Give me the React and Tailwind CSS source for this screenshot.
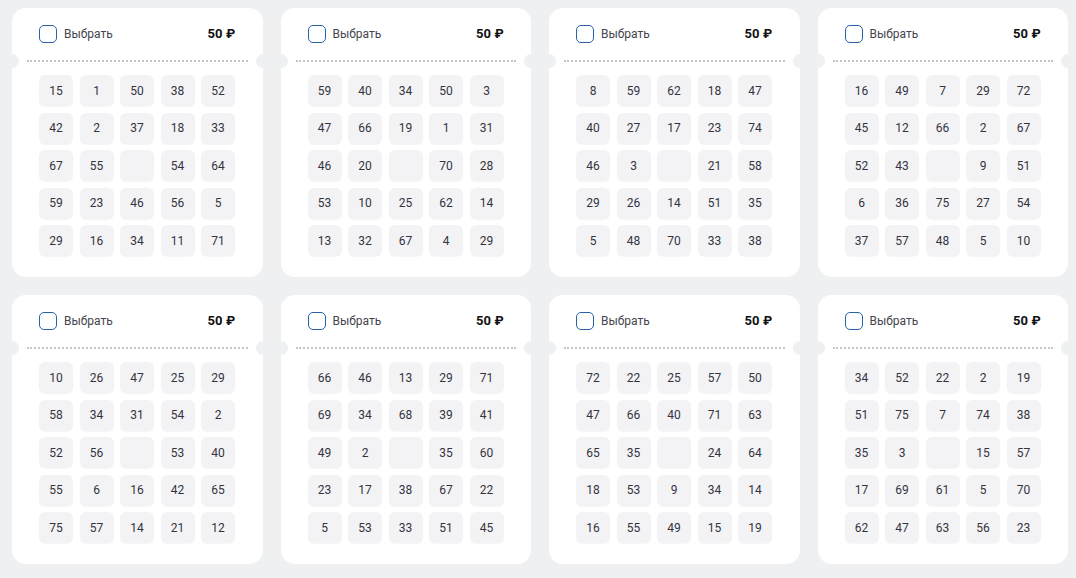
import React from 'react';

const tickets = [
  [[15, 1, 50, 38, 52], [42, 2, 37, 18, 33], [67, 55, null, 54, 64], [59, 23, 46, 56, 5], [29, 16, 34, 11, 71]],
  [[59, 40, 34, 50, 3], [47, 66, 19, 1, 31], [46, 20, null, 70, 28], [53, 10, 25, 62, 14], [13, 32, 67, 4, 29]],
  [[8, 59, 62, 18, 47], [40, 27, 17, 23, 74], [46, 3, null, 21, 58], [29, 26, 14, 51, 35], [5, 48, 70, 33, 38]],
  [[16, 49, 7, 29, 72], [45, 12, 66, 2, 67], [52, 43, null, 9, 51], [6, 36, 75, 27, 54], [37, 57, 48, 5, 10]],
  [[10, 26, 47, 25, 29], [58, 34, 31, 54, 2], [52, 56, null, 53, 40], [55, 6, 16, 42, 65], [75, 57, 14, 21, 12]],
  [[66, 46, 13, 29, 71], [69, 34, 68, 39, 41], [49, 2, null, 35, 60], [23, 17, 38, 67, 22], [5, 53, 33, 51, 45]],
  [[72, 22, 25, 57, 50], [47, 66, 40, 71, 63], [65, 35, null, 24, 64], [18, 53, 9, 34, 14], [16, 55, 49, 15, 19]],
  [[34, 52, 22, 2, 19], [51, 75, 7, 74, 38], [35, 3, null, 15, 57], [17, 69, 61, 5, 70], [62, 47, 63, 56, 23]],
];

const Ticket = ({ rows }) => (
  <div className="relative h-[269px] bg-white rounded-[14px]">
    {/* notches */}
    <div className="absolute left-[-7px] top-[46px] w-[14px] h-[14px] rounded-full bg-[#eff0f1]" />
    <div className="absolute right-[-7px] top-[46px] w-[14px] h-[14px] rounded-full bg-[#eff0f1]" />

    <div className="flex items-center justify-between px-[27px] pt-[17px] h-[35px]">
      <label className="flex items-center gap-[7px]">
        <span className="w-[18px] h-[18px] rounded-[5px] border-[1.5px] border-[#2862a6] bg-white" />
        <span className="text-[12px] text-[#44444e]">Выбрать</span>
      </label>
      <span className="text-[13px] font-bold text-[#111] tracking-[0.2px]">50 ₽</span>
    </div>

    <div className="mx-[15px] mt-[17px] border-t-2 border-dotted border-[#c4c5cb]" />

    <div className="grid grid-cols-[repeat(5,34px)] gap-x-[6.5px] gap-y-[6.5px] px-[27px] mt-[13px]">
      {rows.flat().map((n, i) => (
        <div
          key={i}
          className="h-[31px] rounded-[6px] bg-[#f3f3f6] shadow-[0_1px_1px_rgba(0,0,0,0.04)] flex items-center justify-center text-[12px] text-[#33333d]"
        >
          {n}
        </div>
      ))}
    </div>
  </div>
);

export default function App() {
  return (
    <div className="w-[1076px] h-[578px] bg-[#eff0f1] pl-[12px] pt-[8px] overflow-hidden" style={{ fontFamily: 'Roboto, "Liberation Sans", sans-serif' }}>
      <div className="grid grid-cols-4 w-[1056px] gap-x-[18px] gap-y-[18px]">
        {tickets.map((t, i) => (
          <Ticket key={i} rows={t} />
        ))}
      </div>
    </div>
  );
}
